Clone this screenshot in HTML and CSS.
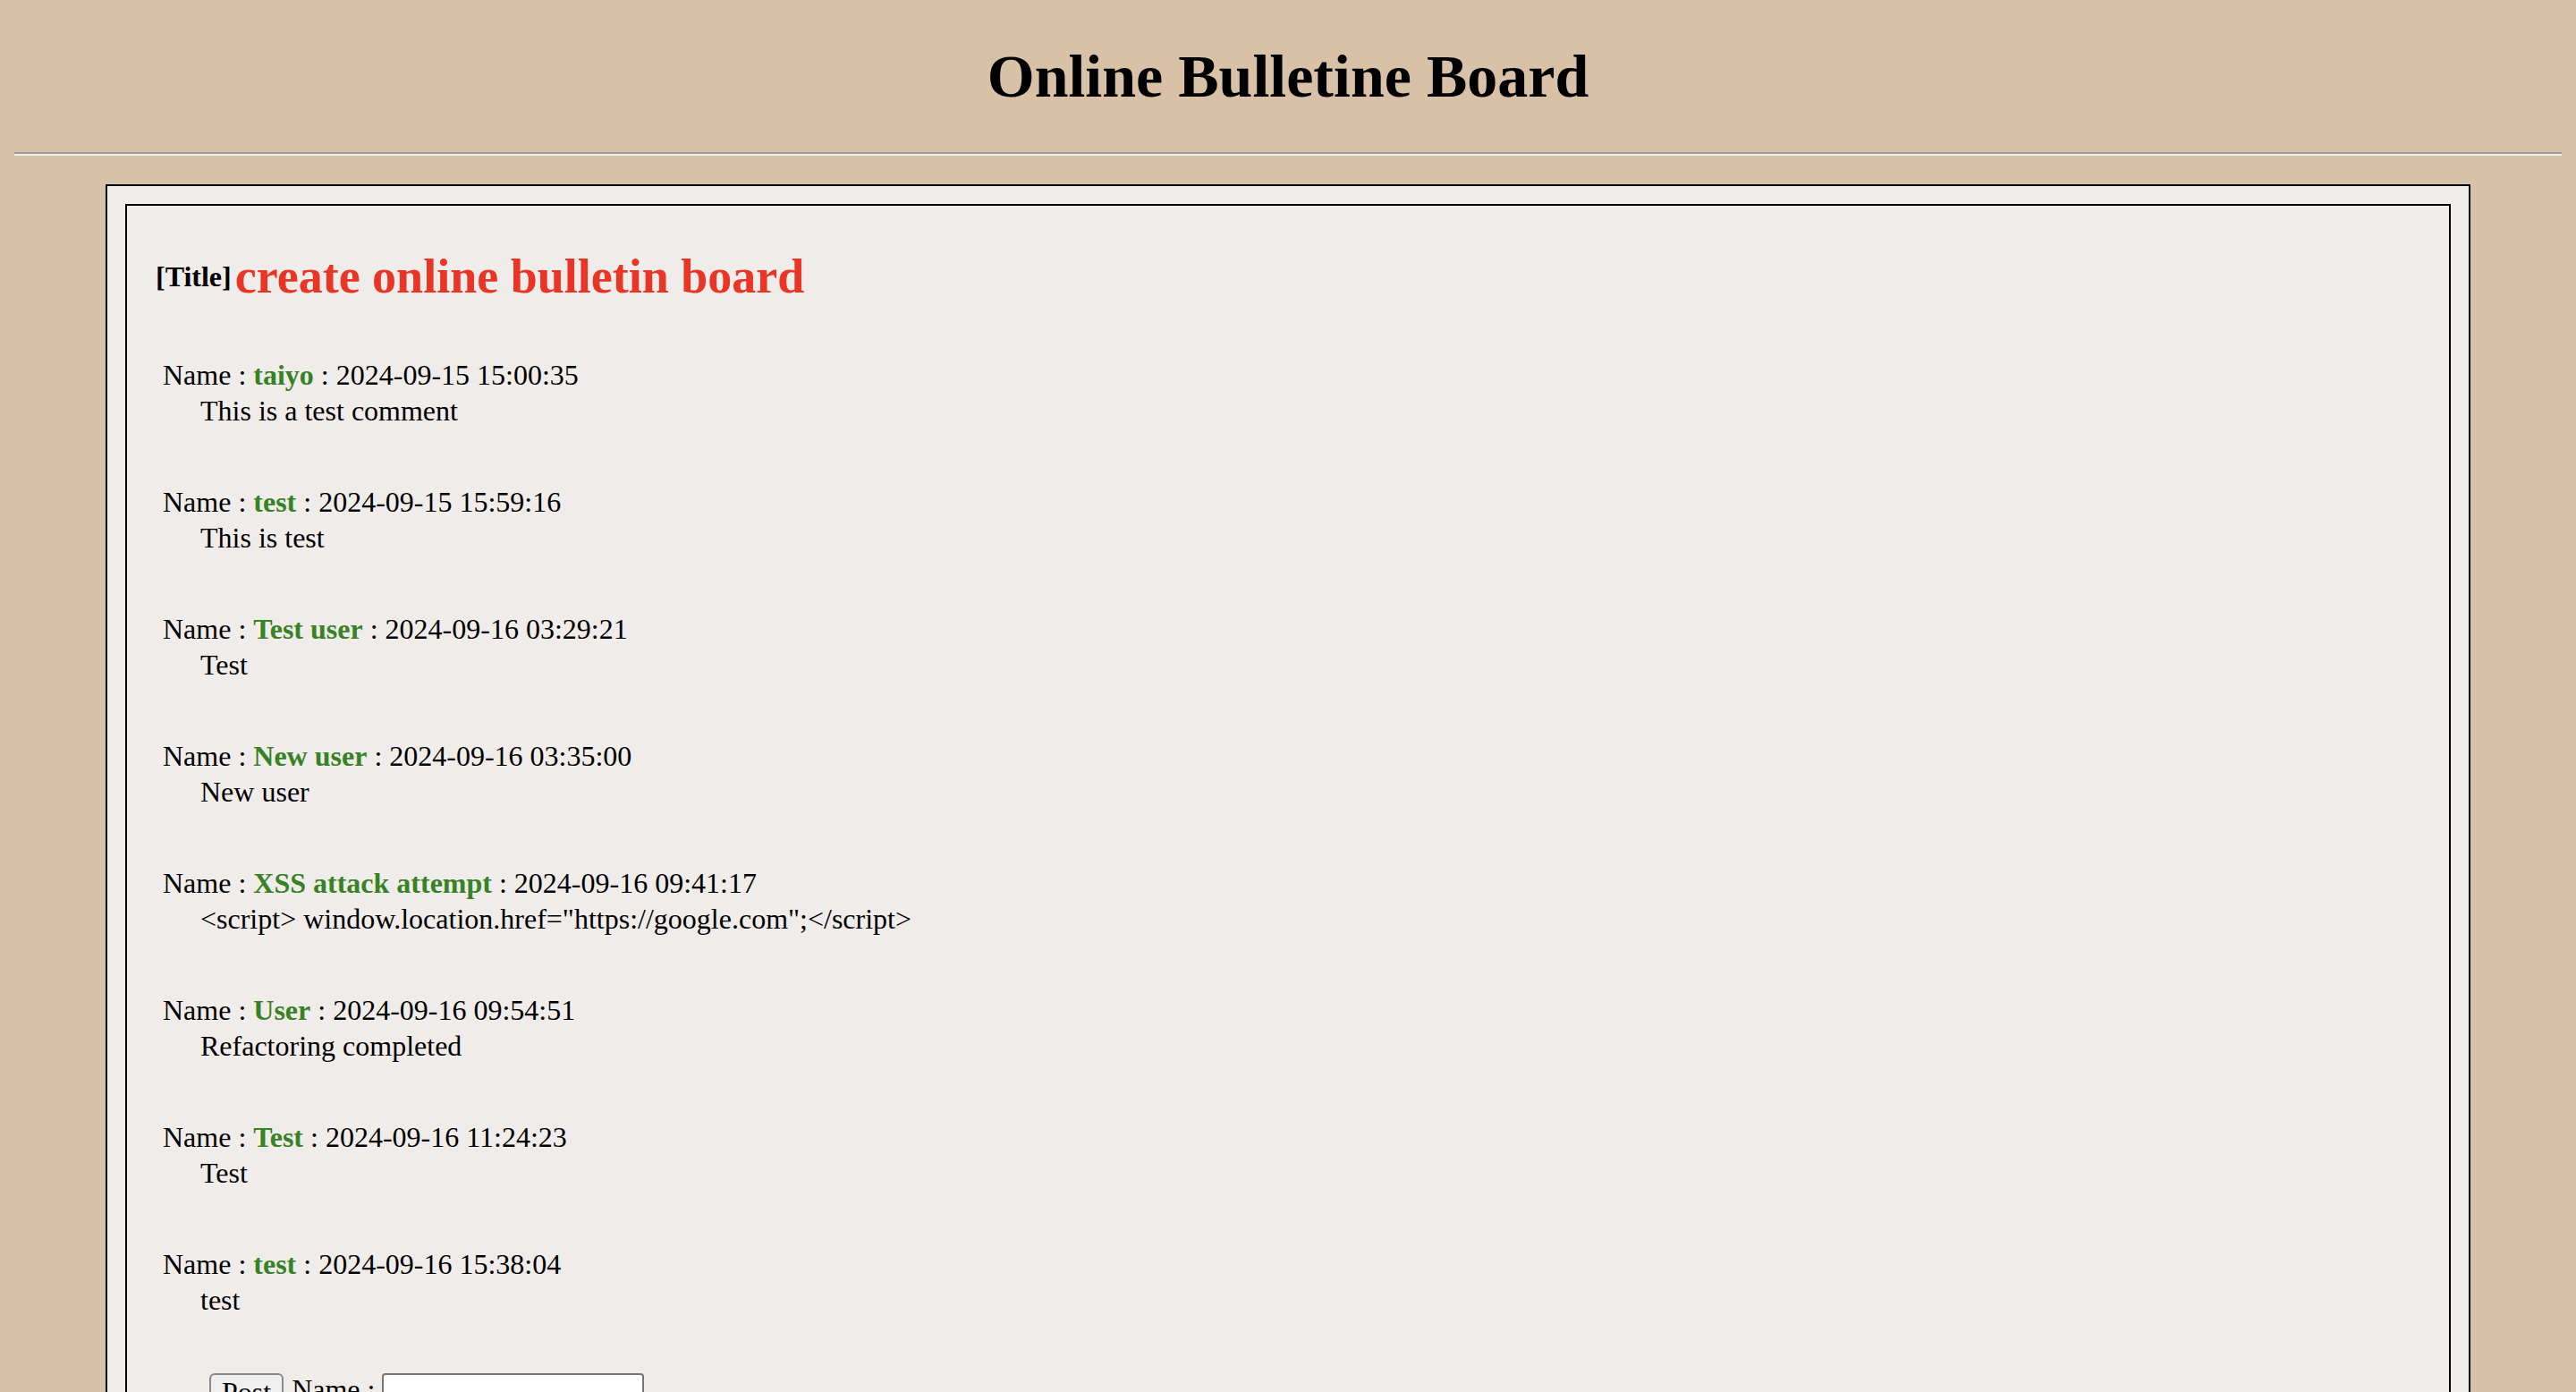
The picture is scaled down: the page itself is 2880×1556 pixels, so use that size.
FILE: index.html
```html
<!DOCTYPE html>
<html lang="en">
<head>
<meta charset="utf-8">
<title>Online Bulletine Board</title>
<link rel="stylesheet" href="styles.css">
</head>
<body>
<h1 class="page-title">Online Bulletine Board</h1>
<hr class="divider">
<div class="board">
  <section class="thread">
    <div class="thread-head">
      <span class="thread-label">[Title]</span>
      <h2 class="thread-title">create online bulletin board</h2>
    </div>

    <article class="post">
      <div class="post-meta">Name : <span class="post-name">taiyo</span> : <time>2024-09-15 15:00:35</time></div>
      <p class="post-body">This is a test comment</p>
    </article>
    <article class="post">
      <div class="post-meta">Name : <span class="post-name">test</span> : <time>2024-09-15 15:59:16</time></div>
      <p class="post-body">This is test</p>
    </article>
    <article class="post">
      <div class="post-meta">Name : <span class="post-name">Test user</span> : <time>2024-09-16 03:29:21</time></div>
      <p class="post-body">Test</p>
    </article>
    <article class="post">
      <div class="post-meta">Name : <span class="post-name">New user</span> : <time>2024-09-16 03:35:00</time></div>
      <p class="post-body">New user</p>
    </article>
    <article class="post">
      <div class="post-meta">Name : <span class="post-name">XSS attack attempt</span> : <time>2024-09-16 09:41:17</time></div>
      <p class="post-body">&lt;script&gt; window.location.href="https://google.com";&lt;/script&gt;</p>
    </article>
    <article class="post">
      <div class="post-meta">Name : <span class="post-name">User</span> : <time>2024-09-16 09:54:51</time></div>
      <p class="post-body">Refactoring completed</p>
    </article>
    <article class="post">
      <div class="post-meta">Name : <span class="post-name">Test</span> : <time>2024-09-16 11:24:23</time></div>
      <p class="post-body">Test</p>
    </article>
    <article class="post">
      <div class="post-meta">Name : <span class="post-name">test</span> : <time>2024-09-16 15:38:04</time></div>
      <p class="post-body">test</p>
    </article>

    <form class="post-form" onsubmit="return false;">
      <div class="form-row">
        <input type="submit" value="Post" class="post-button">
        <label class="form-label" for="username">Name :</label>
        <input type="text" id="username" name="username" class="name-input">
      </div>
      <div class="form-row">
        <textarea class="comment-area" name="comment"></textarea>
      </div>
    </form>
  </section>
</div>
</body>
</html>
```

FILE: styles.css
```css
html {
  background: #d9c1a8;
}

body {
  margin: 0 16px 16px;
  padding-top: 0.02px;
  font-family: "Liberation Serif", "Times New Roman", serif;
  font-size: 32px;
  color: #000;
}

.page-title {
  font-size: 68px;
  font-weight: bold;
  text-align: center;
  margin: 45.6px 0;
}

.divider {
  margin: 16px 0;
  height: 0;
  border: 0;
  border-top: 2px solid #9a9a9a;
  border-bottom: 2px solid #eeeeee;
}

.board {
  margin: 32px 102px 0;
  padding: 20px;
  border: 2px solid #000;
  background: #f0ecea;
}

.thread {
  border: 2px solid #000;
  padding: 48px 32px 48px 32px;
  background: #f0ecea;
}

.thread-head {
  display: flex;
  align-items: center;
  gap: 4px;
  margin-bottom: 59px;
}

.thread-label {
  font-weight: bold;
  font-size: 32px;
}

.thread-title {
  margin: 0;
  font-size: 54px;
  font-weight: bold;
  color: #e93526;
}

.post {
  padding-left: 8px;
  margin-bottom: 62px;
}

.post-meta {
  line-height: 40px;
}

.post-name {
  font-weight: bold;
  color: #388226;
}

.post-body {
  margin: 0;
  padding-left: 42px;
  line-height: 40px;
}

.post-form {
  margin-top: 3px;
  padding-left: 60px;
}

.form-row {
  display: flex;
  align-items: flex-start;
  margin-bottom: 16px;
}

.post-button {
  font-family: "Liberation Serif", "Times New Roman", serif;
  font-size: 32px;
  color: #000;
  padding: 1px 12px 3px;
  border: 2px solid #8a8a8a;
  border-radius: 6px;
  background: #efefef;
}

.form-label {
  margin: 0 8px 0 9px;
}

.name-input {
  box-sizing: border-box;
  width: 293px;
  height: 42px;
  padding: 2px 4px;
  border: 2px solid #767676;
  border-radius: 4px;
  background: #fff;
  font-family: "Liberation Serif", "Times New Roman", serif;
  font-size: 32px;
}

.comment-area {
  box-sizing: border-box;
  width: 600px;
  height: 200px;
  border: 2px solid #767676;
  border-radius: 4px;
  background: #fff;
}
```
